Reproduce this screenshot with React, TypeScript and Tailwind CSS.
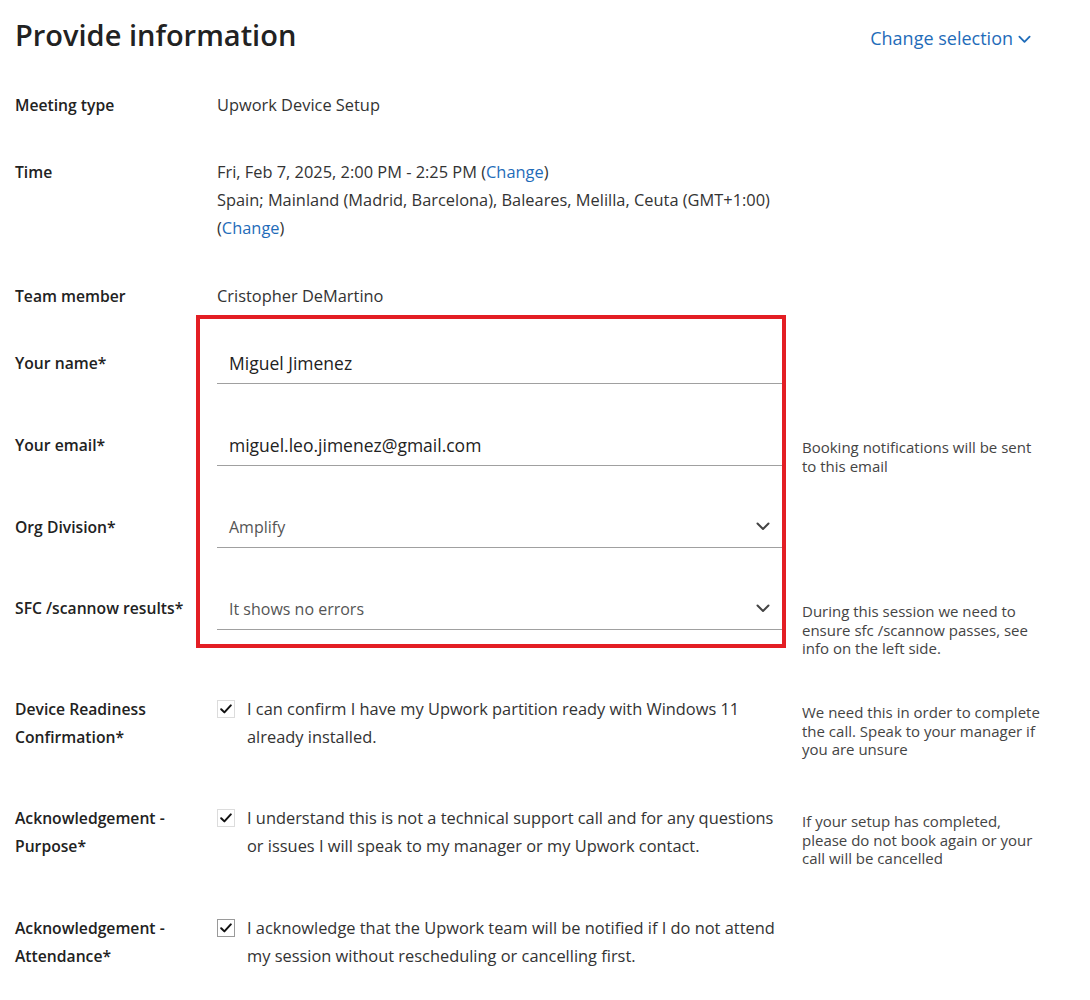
import React from "react";

const labelCls =
  "w-[202px] shrink-0 text-[15.7px] font-semibold leading-[28px] text-[#222]";
const valueCls = "text-[16.4px] leading-[28px] text-[#333]";
const hintCls = "w-[260px] pl-5 text-[15px] leading-[18.5px] text-[#444]";

function Chevron({ className }: { className?: string }) {
  return (
    <svg
      viewBox="0 0 14 9"
      className={className}
      fill="none"
      stroke="currentColor"
      strokeWidth="2"
      strokeLinecap="round"
      strokeLinejoin="round"
    >
      <path d="M1.5 1.5l5.5 5.5 5.5-5.5" />
    </svg>
  );
}

function Field({
  value,
  select,
}: {
  value: string;
  select?: boolean;
}) {
  return (
    <div className="flex h-[44px] w-[565px] shrink-0 items-center justify-between border-b border-[#a0a0a0] pl-3 pr-3 pt-[3px]">
      <span
        className={
          select
            ? "text-[16px] text-[#555]"
            : "text-[17.5px] text-[#222]"
        }
      >
        {value}
      </span>
      {select && <Chevron className="mb-[2px] h-[9px] w-[14px] text-[#444]" />}
    </div>
  );
}

function CheckBox({ focused }: { focused?: boolean }) {
  return (
    <div
      className={
        "mt-[5px] flex h-[18px] w-[18px] shrink-0 items-center justify-center border bg-white " +
        (focused ? "border-[#9a9a9a]" : "border-[#dcdcdc]")
      }
    >
      <svg viewBox="0 0 12 10" className="h-[10px] w-[12px]" fill="none">
        <path
          d="M1.2 5.2l3.2 3.2L10.8 1.4"
          stroke="#111"
          strokeWidth="2"
          strokeLinecap="round"
          strokeLinejoin="round"
        />
      </svg>
    </div>
  );
}

export default function App() {
  return (
    <div className="min-h-[1000px] w-[1090px] bg-white px-[15px] font-['Open_Sans',sans-serif]">
      <header className="flex h-[91px] items-start justify-between pt-[13px]">
        <h1 className="text-[29px] font-[560] leading-[44px] text-[#222]">
          Provide information
        </h1>
        <button
          type="button"
          className="mr-[44px] mt-[12px] flex items-center gap-[5px] text-[18px] leading-[26px] text-[#1f6cb9]"
        >
          Change selection
          <Chevron className="mt-[2px] h-[9px] w-[13px]" />
        </button>
      </header>

      <div className="flex">
        <div className={labelCls}>Meeting type</div>
        <div className={valueCls}>Upwork Device Setup</div>
      </div>

      <div className="mt-[39px] flex">
        <div className={labelCls}>Time</div>
        <div className={valueCls}>
          Fri, Feb 7, 2025, 2:00 PM - 2:25 PM (
          <a className="text-[#1f6cb9]">Change</a>)
          <br />
          Spain; Mainland (Madrid, Barcelona), Baleares, Melilla, Ceuta
          (GMT+1:00)
          <br />(<a className="text-[#1f6cb9]">Change</a>)
        </div>
      </div>

      <div className="mt-[40px] flex h-[28px]">
        <div className={labelCls}>Team member</div>
        <div className={valueCls}>Cristopher DeMartino</div>
      </div>

      <section className="relative h-[338px] pt-[30px]">
        <div className="pointer-events-none absolute left-[181px] top-[5px] h-[333px] w-[590px] border-4 border-[#e31e24]" />

        <div className="flex h-[82px] items-start">
          <div className={labelCls + " pt-[9px]"}>Your name*</div>
          <Field value="Miguel Jimenez" />
        </div>

        <div className="flex h-[82px] items-start">
          <div className={labelCls + " pt-[9px]"}>Your email*</div>
          <Field value="miguel.leo.jimenez@gmail.com" />
          <p className={hintCls + " pt-[16px]"}>
            Booking notifications will be sent to this email
          </p>
        </div>

        <div className="flex h-[82px] items-start">
          <div className={labelCls + " pt-[9px]"}>Org Division*</div>
          <Field value="Amplify" select />
        </div>

        <div className="flex items-start">
          <div className={labelCls + " pt-[8px]"}>SFC /scannow results*</div>
          <Field value="It shows no errors" select />
          <p className={hintCls + " pt-[16px]"}>
            During this session we need to ensure sfc /scannow passes, see
            info on the left side.
          </p>
        </div>
      </section>

      <div className="mt-[47px] flex h-[109px] items-start">
        <div className={labelCls}>
          Device Readiness
          <br />
          Confirmation*
        </div>
        <div className="flex w-[565px] shrink-0 gap-[12px]">
          <CheckBox />
          <div className={valueCls}>
            I can confirm I have my Upwork partition ready with Windows 11
            <br />
            already installed.
          </div>
        </div>
        <p className={hintCls + " pt-[8px]"}>
          We need this in order to complete the call. Speak to your manager if
          you are unsure
        </p>
      </div>

      <div className="flex h-[110px] items-start">
        <div className={labelCls}>
          Acknowledgement -
          <br />
          Purpose*
        </div>
        <div className="flex w-[565px] shrink-0 gap-[12px]">
          <CheckBox />
          <div className={valueCls}>
            I understand this is not a technical support call and for any
            questions
            <br />
            or issues I will speak to my manager or my Upwork contact.
          </div>
        </div>
        <p className={hintCls + " pt-[8px]"}>
          If your setup has completed, please do not book again or your call
          will be cancelled
        </p>
      </div>

      <div className="flex items-start">
        <div className={labelCls}>
          Acknowledgement -
          <br />
          Attendance*
        </div>
        <div className="flex w-[565px] shrink-0 gap-[12px]">
          <CheckBox focused />
          <div className={valueCls}>
            I acknowledge that the Upwork team will be notified if I do not
            attend
            <br />
            my session without rescheduling or cancelling first.
          </div>
        </div>
      </div>
    </div>
  );
}
